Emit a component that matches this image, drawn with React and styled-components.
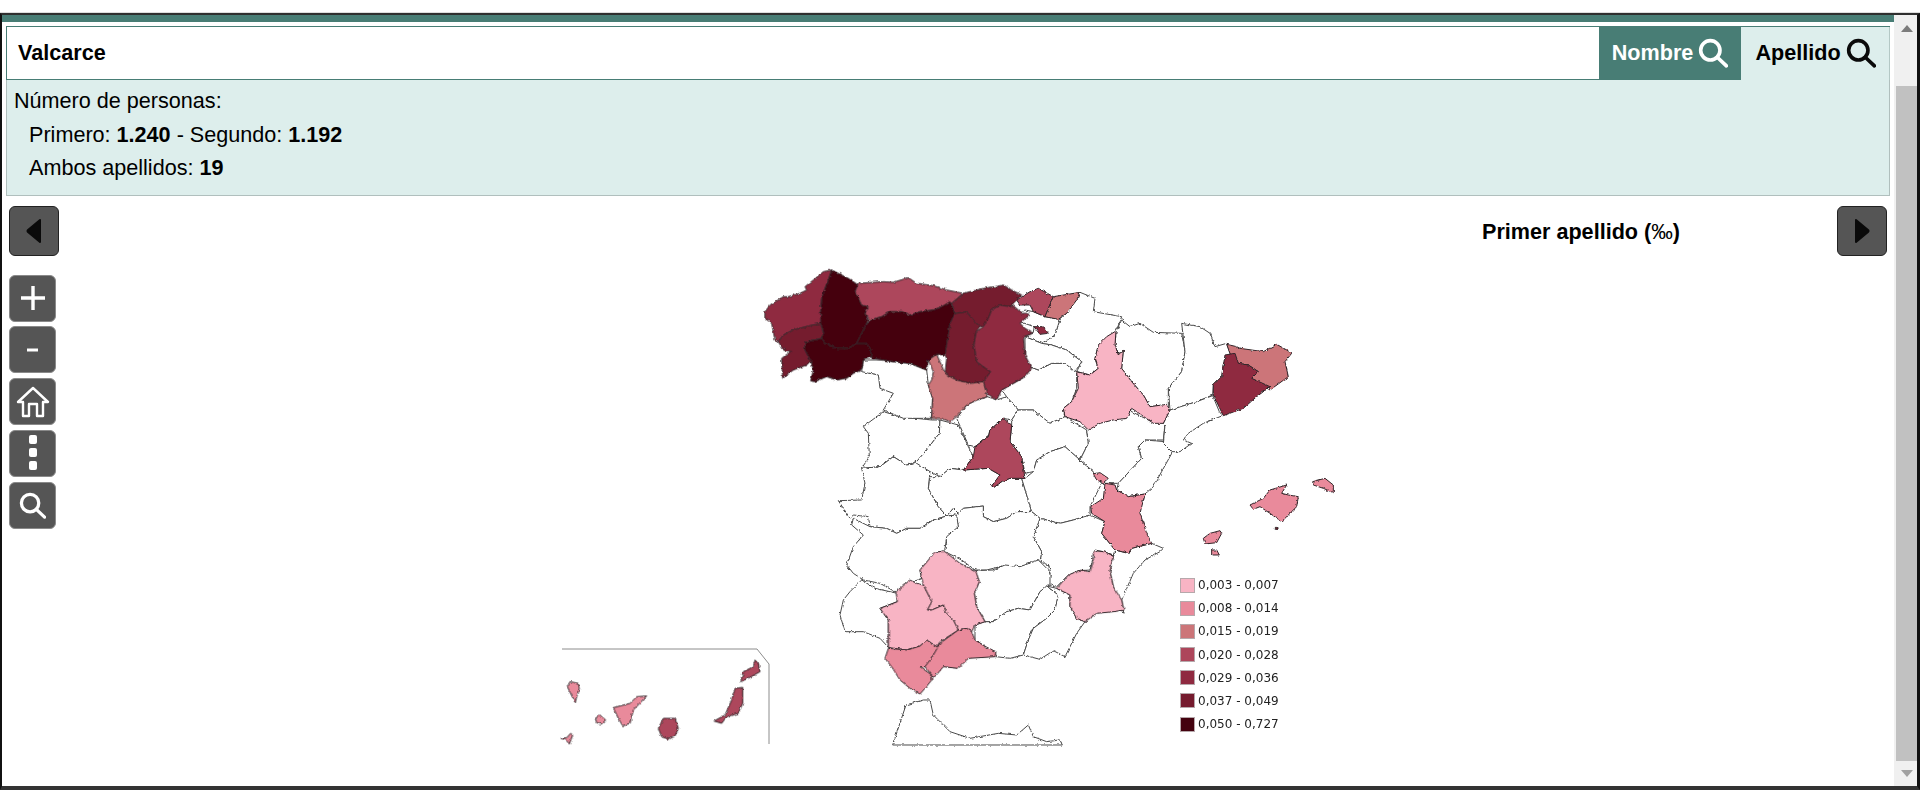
import React from 'react';
import styled, { createGlobalStyle } from 'styled-components';

const Global = createGlobalStyle`
  html, body { margin: 0; padding: 0; background: #fff; overflow: hidden; }
  body { font-family: "Liberation Sans", Arial, sans-serif; color: #000; }
  * { box-sizing: border-box; }
`;

const C = ['#ffffff', '#f8b4c4', '#e98a9b', '#cc7579', '#ad465b', '#8f2a40', '#751b2e', '#44020f'];

const Page = styled.div`height: 790px; padding-top: 13px; background: #fff;`;
const Frame = styled.div`
  height: 777px; display: flex;
  border-top: 2px solid #2f2f2f; border-left: 2px solid #111;
  border-right: 3px solid #111; border-bottom: 4px solid #333;
  box-shadow: 0 -1px 0 #ddd;
`;
const Main = styled.div`flex: 1; min-width: 0; display: flex; flex-direction: column;`;
const GreenBar = styled.div`height: 7px; background: #487d75; flex: none;`;
const SearchRow = styled.div`
  display: flex; height: 54px; margin: 4px 4px 0 4px; flex: none;
  border-top: 1px solid #487d75;
`;
const SearchField = styled.div`
  flex: 1; background: #fff; display: flex; align-items: center; padding-left: 11px; padding-bottom: 1px;
  font-weight: 700; font-size: 21.6px; border-left: 1px solid #487d75; border-bottom: 1px solid #487d75;
`;
const Tab = styled.div`
  display: flex; align-items: center; justify-content: center; gap: 5px; padding-bottom: 1px;
  width: ${p => p.$w}px; font-weight: 700; font-size: 21.6px;
  background: ${p => (p.$active ? '#487d75' : '#ddeeec')};
  color: ${p => (p.$active ? '#fff' : '#000')};
  border-right: ${p => (p.$active ? '1px solid #ddeeec' : '1px solid #b4c8c5')};
`;
const InfoPanel = styled.div`
  height: 116px; margin: 0 4px; flex: none; background: #ddeeec; padding: 4px 7px 0 7px;
  border: 1px solid #b0bfbd; border-top: none; font-size: 21.6px; line-height: 33.5px;
`;
const Indented = styled.div`padding-left: 15px;`;
const Stage = styled.div`flex: 1; position: relative; min-height: 0;`;
const NavRow = styled.div`
  display: flex; align-items: center; justify-content: space-between;
  padding: 10px 7px 0 7px;
`;
const NavButton = styled.div`
  width: 50px; height: 50px; background: #555; border: 1px solid #222; border-radius: 6px;
  display: flex; align-items: center; justify-content: center;
`;
const Title = styled.div`
  flex: 1; text-align: right; padding-right: 157px; padding-top: 2px;
  font-weight: 700; font-size: 21.6px;
`;
const PerMille = styled.span`font-weight: 400;`;
const Tools = styled.div`
  display: flex; flex-direction: column; gap: 4.75px; margin: 18.5px 0 0 7px; width: 47px;
  position: relative; z-index: 2;
`;
const ToolButton = styled.div`
  width: 47px; height: 47px; background: #555; border-radius: 6px; border: 1px solid #8a8a8a;
  display: flex; align-items: center; justify-content: center;
`;
const MapCanvas = styled.div`
  position: absolute; left: 548px; top: 64px; width: 800px; height: 500px;
`;
const MapSvg = styled.svg`display: block; width: 800px; height: 500px;`;
const Legend = styled.div`
  position: absolute; left: 630px; top: 318px; display: flex; flex-direction: column; gap: 9.2px;
`;
const LegendRow = styled.div`
  display: flex; align-items: center; gap: 3px; height: 14px;
  font-family: "DejaVu Sans", Verdana, sans-serif; font-size: 12px; color: #222;
`;
const Swatch = styled.span`
  width: 15px; height: 15px; flex: none; background: ${p => p.$c}; border: 1px solid #b6a8ab;
`;
const Scrollbar = styled.div`
  width: 23px; flex: none; background: #f0f0f0; display: flex; flex-direction: column; align-items: stretch;
`;
const ScrollEnd = styled.div`
  height: ${p => p.$h}px; display: flex; align-items: ${p => p.$align}; justify-content: center; flex: none;
  padding: ${p => p.$pad};
`;
const ScrollThumb = styled.div`flex: 1; background: #c1c1c1; margin-left: 2px;`;

const Search = ({ color, size = 30 }) => (
  <svg width={size} height={size} viewBox="0 0 28 28" fill="none" stroke={color} strokeWidth="3.4" strokeLinecap="round">
    <circle cx="11.5" cy="11.5" r="9" />
    <path d="M18 18 L26.5 26" />
  </svg>
);
const Arrow = ({ dir }) => (
  <svg width="16" height="26" viewBox="0 0 16 26">
    <path
      d={dir === 'left' ? 'M14 2 L14 24 L2 14 Q1 13 2 12 Z' : 'M2 2 L2 24 L14 14 Q15 13 14 12 Z'}
      fill="#0a0a0a" stroke="#0a0a0a" strokeWidth="2" strokeLinejoin="round"
    />
  </svg>
);

/* A: crop at (750,255) 3x */
const A = [
  [0, '340,315 400,315 430,320 480,325 530,345 535,390 548,430 545,490 460,490 400,465 430,415 390,400 385,360 335,350'],
  [5, '45,170 60,150 100,125 115,125 150,115 170,105 165,95 190,75 220,50 245,45 235,75 225,100 215,130 212,170 218,205 180,212 130,225 100,240 85,260 75,255 70,230 65,205 45,190'],
  [7, '245,45 265,55 295,70 325,90 315,110 335,150 355,155 345,175 355,195 345,215 330,245 320,265 295,280 260,280 225,265 215,250 220,230 212,205 212,170 215,130 225,100 235,75'],
  [6, '100,240 130,225 180,212 212,205 220,235 215,250 190,255 165,262 165,285 182,318 170,330 130,345 98,370 95,310 115,295 125,290 100,285 85,260'],
  [7, '165,262 215,250 225,265 260,280 295,280 320,265 350,265 362,285 365,305 340,315 335,345 310,355 290,370 260,375 230,365 195,380 182,378 190,345 182,318 165,285'],
  [4, '325,85 400,80 430,82 475,68 500,85 550,92 590,105 640,115 605,145 575,155 550,165 510,170 480,180 455,170 420,170 395,185 360,195 345,175 355,155 335,150 315,110'],
  [7, '360,195 395,185 420,170 455,170 480,180 510,170 550,165 575,155 600,140 615,175 600,205 590,270 585,300 560,298 535,315 530,345 480,325 430,320 400,315 365,310 362,285 350,265 320,265 330,245 345,215'],
  [6, '615,175 650,170 670,195 690,215 678,230 672,270 680,320 700,335 722,350 700,380 660,385 620,375 600,365 585,355 590,310 585,300 590,270 600,205'],
  [6, '640,115 700,100 735,95 760,90 785,105 815,120 800,135 780,155 750,150 725,165 715,190 720,205 690,215 670,195 650,170 615,175 605,145'],
  [5, '725,165 750,150 780,155 790,152 805,165 815,175 830,175 840,180 820,195 810,205 825,220 850,235 820,245 825,300 845,340 825,365 790,385 755,405 740,435 710,415 700,380 722,350 700,335 680,320 672,270 678,230 700,215 715,190'],
  [3, '535,315 560,298 585,355 600,365 620,375 660,385 700,380 712,425 680,435 650,450 620,485 600,500 575,490 545,490 548,430 535,390 545,375 550,350'],
];
/* B: crop at (1000,255) 3x */
const B = [
  [0, '240,112 285,130 280,170 365,185 350,225 345,235 320,250 295,270 285,310 295,340 270,360 230,350 245,320 200,285 155,270 125,265 165,240 180,193 200,175'],
  [0, '75,165 100,170 135,185 180,193 165,240 125,265 75,245 100,232 102,215 60,200 50,180'],
  [0, '75,245 125,265 155,270 200,285 245,320 225,350 195,325 155,325 115,345 90,335 70,310 75,280'],
  [0, '365,195 390,215 420,205 460,232 545,235 555,290 545,350 505,400 505,455 450,455 430,420 395,380 365,340 370,285 355,300 345,270 348,228'],
  [0, '545,205 600,215 630,235 645,275 680,265 690,295 670,325 665,365 640,390 638,420 590,440 510,465 505,400 545,350 555,290'],
  [0, '638,422 658,470 668,482 610,505 565,535 550,555 575,565 540,590 515,590 490,565 495,510 490,505 510,465 590,440'],
  [4, '50,135 90,110 115,100 160,125 135,185 100,170 90,150 60,150'],
  [3, '160,125 240,112 230,135 200,175 175,193 135,185'],
  [5, '102,215 130,215 145,235 120,238'],
  [1, '348,228 345,270 355,300 370,285 365,340 395,380 430,420 450,455 500,448 510,465 490,505 460,505 410,470 395,460 380,490 340,495 300,505 265,525 240,500 195,485 190,460 215,440 235,400 230,350 270,360 295,340 285,310 295,270 320,245'],
  [3, '680,268 710,275 720,280 790,290 830,268 860,285 875,295 855,320 865,365 810,405 755,370 775,350 745,330 715,325 690,295'],
  [5, '675,300 705,295 715,325 745,330 775,350 755,370 810,395 770,425 730,460 670,482 640,420 640,390 665,365'],
];
/* Cc: crop at (820,400) 3x */
const Cc = [
  [0, '130,80 190,35 240,50 335,60 360,60 358,100 320,150 290,185 260,195 220,170 180,200 125,205 148,170 145,100'],
  [0, '360,60 415,75 445,140 460,170 430,210 390,205 360,230 330,215 285,190 320,150 358,100'],
  [0, '410,55 440,15 470,0 502,-10 530,0 560,-10 595,30 575,60 550,55 510,90 505,110 465,140 445,135'],
  [0, '545,-30 580,-50 615,-70 630,-100 655,-90 695,-110 735,-110 770,-85 770,-35 755,5 730,25 735,50 690,70 640,30 595,30 560,-10'],
  [0, '575,60 595,30 640,30 690,70 735,50 800,90 805,130 780,180 735,140 690,155 650,180 640,215 615,220 605,170 570,125 575,75'],
  [0, '125,205 180,200 220,170 260,195 290,190 330,215 325,265 355,320 380,348 340,360 300,385 260,385 230,400 200,385 150,380 145,350 100,345 90,355 55,302 125,300 135,250'],
  [0, '330,230 360,230 390,205 430,210 505,205 540,225 515,258 522,262 545,245 570,235 605,235 635,335 590,335 560,355 520,365 490,350 490,318 430,325 415,340 400,325 380,348 355,320 325,265'],
  [0, '640,215 650,180 690,155 735,140 780,180 820,215 845,250 810,320 810,345 760,360 720,370 660,355 635,335 605,235 615,235'],
  [0, '780,180 805,130 800,90 830,70 870,60 925,30 985,60 1035,70 1030,120 975,120 955,140 965,175 895,250 845,250 820,215'],
  [0, '895,250 965,175 955,140 975,120 1035,125 1058,155 1000,260 975,282 925,290 890,270'],
  [0, '885,450 925,460 935,445 995,430 1030,445 1020,455 975,480 940,520 905,600 912,640 880,560 870,515'],
  [0, '660,355 720,370 760,360 810,345 855,365 845,400 885,450 880,465 850,455 825,450 810,510 775,512 740,530 710,560 680,545 695,525 685,495 660,485 665,455 640,410'],
  [0, '380,348 400,325 415,340 430,325 490,318 490,350 520,365 560,355 590,335 635,335 660,355 640,410 665,455 660,485 600,500 540,500 500,510 465,510 425,480 385,460 355,455 380,430 375,400 415,380 405,345'],
  [0, '100,355 150,380 200,385 230,400 260,385 300,385 340,360 380,348 410,345 415,380 380,410 375,450 345,460 300,510 305,535 280,545 225,575 180,550 130,540 100,520 80,495 100,440 130,405 95,375'],
  [4, '550,55 575,75 570,125 605,170 615,235 570,235 545,245 522,262 515,258 540,225 505,205 430,210 460,170 465,140 505,110 510,90'],
  [2, '820,222 840,218 865,235 850,248 830,240'],
  [2, '855,250 885,255 890,270 925,290 975,282 960,340 980,400 995,430 935,445 925,460 885,450 845,400 855,365 815,340 812,320 850,295'],
];
/* D: crop at (820,560) 3x */
const D = [
  [0, '125,60 165,85 232,100 232,125 180,145 205,180 205,262 180,235 130,215 75,215 60,165 70,120 90,95'],
  [0, '465,32 520,30 555,15 600,20 655,0 690,35 690,75 660,95 630,150 595,145 560,155 520,185 495,185 470,140 463,100 478,65'],
  [0, '465,195 495,185 520,185 560,155 595,145 630,150 660,95 680,78 715,105 705,150 680,175 640,205 625,240 610,285 570,295 528,290 525,275 500,262 465,240'],
  [0, '680,78 710,85 750,105 750,140 770,175 795,185 770,220 735,290 700,272 660,298 610,285 625,240 640,205 680,175 705,150 715,105'],
  [1, '820,-28 850,-25 880,-15 870,35 880,80 905,120 912,150 880,155 830,160 795,185 770,175 750,140 750,105 710,85 745,45 780,30 810,35 820,5'],
  [1, '300,30 325,0 345,-25 375,-25 420,10 468,35 478,65 463,100 470,140 495,185 465,195 455,215 440,205 415,210 400,180 380,160 370,135 335,150 322,150 335,125 310,75'],
  [1, '180,145 232,125 228,95 270,60 290,70 310,75 335,125 322,150 335,150 370,135 380,160 400,180 415,210 360,245 350,260 320,240 300,258 262,270 205,262 205,180'],
  [2, '205,265 262,270 300,258 320,240 350,260 362,250 360,270 335,290 330,320 300,320 335,345 335,360 315,385 300,402 270,385 240,360 215,320 195,295'],
  [2, '360,250 415,210 440,205 455,215 465,240 500,262 528,275 525,290 445,295 415,325 370,320 345,350 335,345 315,320 330,300 340,285'],
  [0, '218,555 258,435 310,420 330,420 340,465 390,515 450,535 535,520 590,525 625,495 640,530 680,545 720,540 727,555'],
];
/* E: crop at (550,640) 3x */
const E = [
  [4, '572,125 580,95 610,80 615,60 625,70 630,95 600,112'],
  [4, '492,243 525,225 545,180 555,145 578,142 578,190 565,220 530,230 515,250'],
  [4, '325,265 340,235 375,235 385,265 375,288 355,298 335,290'],
  [2, '190,203 240,190 260,170 290,168 250,210 240,250 218,257 205,235'],
  [2, '136,235 150,225 167,240 155,252 140,248'],
  [2, '52,140 60,125 85,130 88,145 75,187'],
  [2, '33,295 50,293 62,280 68,285 58,312 48,300'],
];
/* F: crop at (1160,470) 3x */
const F = [
  [2, '270,105 310,85 330,60 380,45 365,70 385,75 415,80 410,110 365,155 330,130 300,110 280,118'],
  [2, '458,35 495,25 520,45 520,68 490,55 460,45'],
  [2, '130,205 150,190 180,182 185,190 170,218 135,222'],
  [2, '155,240 170,240 178,255 155,255'],
  [6, '346,172 354,172 354,178 346,178'],
];

const Provinces = ({ x, y, list, pass }) => (
  <g transform={`translate(${x} ${y}) scale(0.33333)`}>
    {list.filter(([c]) => (pass === 'white' ? c === 0 : c !== 0)).map(([c, pts], i) => (
      <polygon key={i} points={pts} fill={C[c]} stroke={c === 0 ? '#4a4a4a' : '#33262a'} strokeWidth="1" vectorEffect="non-scaling-stroke" strokeLinejoin="round" />
    ))}
  </g>
);

const groups = [
  { x: 820, y: 400, list: Cc },
  { x: 820, y: 560, list: D },
  { x: 1000, y: 255, list: B },
  { x: 750, y: 255, list: A },
  { x: 550, y: 640, list: E },
  { x: 1160, y: 470, list: F },
];

const legend = [
  [1, '0,003 - 0,007'], [2, '0,008 - 0,014'], [3, '0,015 - 0,019'], [4, '0,020 - 0,028'],
  [5, '0,029 - 0,036'], [6, '0,037 - 0,049'], [7, '0,050 - 0,727'],
];

export default function App() {
  return (
    <Page>
      <Global />
      <Frame>
        <Main>
          <GreenBar />
          <SearchRow>
            <SearchField>Valcarce</SearchField>
            <Tab $w={143} $active>Nombre <Search color="#fff" /></Tab>
            <Tab $w={148}>Apellido <Search color="#0a0a0a" /></Tab>
          </SearchRow>
          <InfoPanel>
            <div>Número de personas:</div>
            <Indented>Primero: <b>1.240</b> - Segundo: <b>1.192</b></Indented>
            <Indented>Ambos apellidos: <b>19</b></Indented>
          </InfoPanel>
          <Stage>
            <MapCanvas>
              <MapSvg viewBox="550 260 800 500">
                <defs>
                  <filter id="rough" x="-5%" y="-5%" width="110%" height="110%">
                    <feTurbulence type="fractalNoise" baseFrequency="0.28" numOctaves="2" seed="4" />
                    <feDisplacementMap in="SourceGraphic" scale="3" xChannelSelector="R" yChannelSelector="G" />
                    <feGaussianBlur stdDeviation="0.25" />
                  </filter>
                </defs>
                <g filter="url(#rough)">
                  {groups.map((g, i) => <Provinces key={'w' + i} {...g} pass="white" />)}
                  {groups.map((g, i) => <Provinces key={'c' + i} {...g} pass="color" />)}
                </g>
                <polyline points="562,649 757,649 769,664 769,744" fill="none" stroke="#8c8c8c" strokeWidth="1" />
              </MapSvg>
              <Legend>
                {legend.map(([c, t]) => (
                  <LegendRow key={t}><Swatch $c={C[c]} />{t}</LegendRow>
                ))}
              </Legend>
            </MapCanvas>
            <NavRow>
              <NavButton><Arrow dir="left" /></NavButton>
              <Title>Primer apellido (<PerMille>‰</PerMille>)</Title>
              <NavButton><Arrow dir="right" /></NavButton>
            </NavRow>
            <Tools>
              <ToolButton>
                <svg width="30" height="30" viewBox="0 0 30 30"><path d="M15 3 V27 M3 15 H27" stroke="#fff" strokeWidth="3.4" /></svg>
              </ToolButton>
              <ToolButton>
                <svg width="30" height="30" viewBox="0 0 30 30"><path d="M9 15 H20" stroke="#fff" strokeWidth="3" /></svg>
              </ToolButton>
              <ToolButton>
                <svg width="34" height="32" viewBox="0 0 34 32" fill="none" stroke="#fff" strokeWidth="2.4" strokeLinejoin="round" strokeLinecap="round">
                  <path d="M2 16 L17 2 L32 16 L27 16 L27 30 L21 30 L21 18 L13 18 L13 30 L7 30 L7 16 Z" />
                </svg>
              </ToolButton>
              <ToolButton>
                <svg width="10" height="36" viewBox="0 0 10 36" fill="#fff">
                  <rect x="1" y="0" width="8" height="9" rx="2" />
                  <rect x="1" y="13" width="8" height="9" rx="2" />
                  <rect x="1" y="26" width="8" height="9" rx="2" />
                </svg>
              </ToolButton>
              <ToolButton>
                <Search color="#fff" size={27} />
              </ToolButton>
            </Tools>
          </Stage>
        </Main>
        <Scrollbar>
          <ScrollEnd $h={71} $align="flex-start" $pad="10px 0 0 2px">
            <svg width="12" height="7" viewBox="0 0 12 7"><path d="M0 7 L6 0 L12 7 Z" fill="#7c7c7c" /></svg>
          </ScrollEnd>
          <ScrollThumb />
          <ScrollEnd $h={25} $align="center" $pad="0 0 0 2px">
            <svg width="12" height="7" viewBox="0 0 12 7"><path d="M0 0 L6 7 L12 0 Z" fill="#a0a0a0" /></svg>
          </ScrollEnd>
        </Scrollbar>
      </Frame>
    </Page>
  );
}
